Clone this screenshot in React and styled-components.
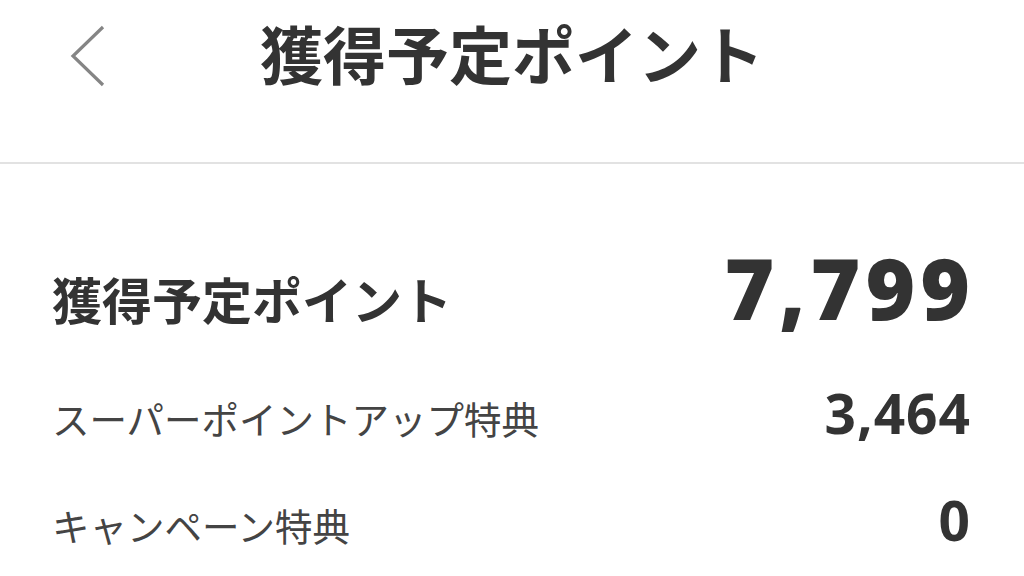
import React from 'react';
import styled, { createGlobalStyle } from 'styled-components';

const GlobalStyle = createGlobalStyle`
  body {
    margin: 0;
    background: #fff;
    font-family: "Noto Sans CJK JP", "Noto Sans", sans-serif;
    color: #333;
  }
`

const Page = styled.div`
  width: 1024px;
  height: 576px;
  overflow: hidden;
  background: #fff;
`

const Header = styled.header`
  position: relative;
  height: 162px;
  border-bottom: 2px solid #e2e2e2;
  display: flex;
  align-items: flex-start;
  justify-content: center;
`

const BackButton = styled.button`
  position: absolute;
  left: 60px;
  top: 20px;
  width: 56px;
  height: 72px;
  padding: 0;
  border: none;
  background: none;
`

const Title = styled.h1`
  margin: 0;
  padding-top: 12px;
  font-size: 63px;
  line-height: 80px;
  font-weight: 700;
  color: #333;
`

const Body = styled.section`
  padding: 0 54px 0 52px;
  display: flex;
  flex-direction: column;
`

const Row = styled.div`
  display: flex;
  justify-content: space-between;
  align-items: baseline;
  height: ${p => p.$h}px;
`

const Label = styled.span`
  font-size: ${p => (p.$main ? 50 : 37.5)}px;
  font-weight: ${p => (p.$main ? 700 : 400)};
  color: ${p => (p.$main ? '#333' : '#444')};
  line-height: 1;
`

const Value = styled.span`
  font-family: "Open Sans", "Noto Sans", sans-serif;
  font-size: ${p => (p.$main ? 85 : 55)}px;
  font-weight: ${p => (p.$main ? 800 : 700)};
  letter-spacing: ${p => (p.$main ? 5 : 1)}px;
  margin-right: ${p => (p.$main ? -5 : -1)}px;
  color: #333;
  line-height: 1;
`

const Spacer = styled.div`
  height: ${p => p.$h}px;
`

const rows = [
  { label: 'スーパーポイントアップ特典', value: '3,464', h: 107 },
  { label: 'キャンペーン特典', value: '0', h: 90 },
];

const App = () => {
  return (<Page>
    <GlobalStyle />
    <Header>
      <BackButton aria-label="back">
        <svg width="56" height="72" viewBox="0 0 56 72">
          <polyline points="43,7 13,36 43,65" fill="none" stroke="#858585" strokeWidth="3.2" />
        </svg>
      </BackButton>
      <Title>獲得予定ポイント</Title>
    </Header>
    <Body>
      <Spacer $h={81} />
      <Row $h={140}>
        <Label $main>獲得予定ポイント</Label>
        <Value $main>7,799</Value>
      </Row>
      {rows.map(r => (
        <Row key={r.label} $h={r.h}>
          <Label>{r.label}</Label>
          <Value>{r.value}</Value>
        </Row>
      ))}
    </Body>
  </Page>)
};

export default App;
